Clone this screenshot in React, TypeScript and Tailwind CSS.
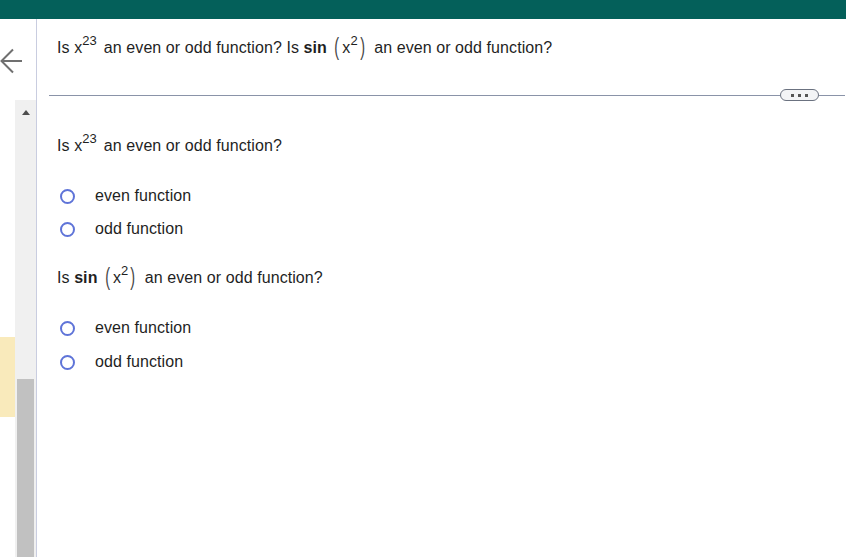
import React from "react";

const font = { fontFamily: '"Liberation Sans", Arial, sans-serif' };

function Sup({ children }: { children: React.ReactNode }) {
  return <sup className="relative -top-[8px] text-[13px] leading-none">{children}</sup>;
}

function Paren({ children, className }: { children: string; className?: string }) {
  return (
    <span className={"inline-block scale-x-[0.9] scale-y-[1.45] text-[#444] " + (className ?? "")}>
      {children}
    </span>
  );
}

function SinX2() {
  return (
    <>
      <b className="font-bold">sin</b>
      <span className="ml-[7px] mr-[9px] inline-flex items-baseline">
        <Paren className="mr-[3px]">(</Paren>
        <span>
          x<Sup>2</Sup>
        </span>
        <Paren className="ml-[2px]">)</Paren>
      </span>
    </>
  );
}

function Radio({ label, className }: { label: string; className?: string }) {
  return (
    <div className={"flex h-6 items-center " + (className ?? "")}>
      <span className="ml-[3px] h-[15px] w-[15px] rounded-full border-2 border-[#5f74d8] bg-white" />
      <span className="ml-5 text-[16px] text-[#1f1f1f]">{label}</span>
    </div>
  );
}

export default function App() {
  return (
    <div className="flex h-[557px] w-[846px] flex-col overflow-hidden bg-white tracking-[0.08px]" style={font}>
      <div className="h-[19px] shrink-0 bg-[#04605a]" />
      <div className="flex flex-1">
        <aside className="flex w-[37px] shrink-0 flex-col border-r border-[#c9cde0]">
          <div className="h-[81px] pt-[29px]">
            <svg width="22" height="26" viewBox="0 0 22 26" fill="none" stroke="#707070" strokeWidth="2">
              <path d="M22 13H1.5M13 1.5 1.5 13 13 24.5" />
            </svg>
          </div>
          <div className="flex flex-1">
            <div className="w-[15px] pt-[237px]">
              <div className="h-[80px] bg-[#f9eabb]" />
            </div>
            <div className="flex w-[21px] flex-col bg-[#f0f0f0]">
              <div className="flex h-[24px] items-center justify-center">
                <div className="h-0 w-0 border-x-[4px] border-b-[5px] border-x-transparent border-b-[#4d4d4d]" />
              </div>
              <div className="mx-[2px] mt-[255px] flex-1 bg-[#c1c1c1]" />
            </div>
          </div>
        </aside>
        <main className="flex-1 text-[16px] text-[#1f1f1f]">
          <div className="box-content h-6 pl-5 pt-[17px] leading-6">
            Is x<Sup>23</Sup>
            <span className="ml-[7px]">an even or odd function? Is </span>
            <SinX2 />
            an even or odd function?
          </div>
          <div className="ml-3 mr-px mt-[29px] flex h-[12px] items-center">
            <div className="h-px flex-1 bg-[#8a93a8]" />
            <div className="flex h-[12px] w-[39px] items-center justify-center gap-[4px] rounded-full border border-[#6b7280] bg-[#f3f4f6]">
              <span className="h-[3px] w-[3px] bg-[#555]" />
              <span className="h-[3px] w-[3px] bg-[#555]" />
              <span className="h-[3px] w-[3px] bg-[#555]" />
            </div>
            <div className="h-px w-[26px] bg-[#8a93a8]" />
          </div>
          <div className="pl-5">
            <div className="mt-[33px] h-6 leading-6">
              Is x<Sup>23</Sup>
              <span className="ml-[7px]">an even or odd function?</span>
            </div>
            <Radio label="even function" className="mt-[26px]" />
            <Radio label="odd function" className="mt-[9px]" />
            <div className="mt-[25px] h-6 leading-6">
              Is <SinX2 />
              an even or odd function?
            </div>
            <Radio label="even function" className="mt-[26px]" />
            <Radio label="odd function" className="mt-[10px]" />
          </div>
        </main>
      </div>
    </div>
  );
}
